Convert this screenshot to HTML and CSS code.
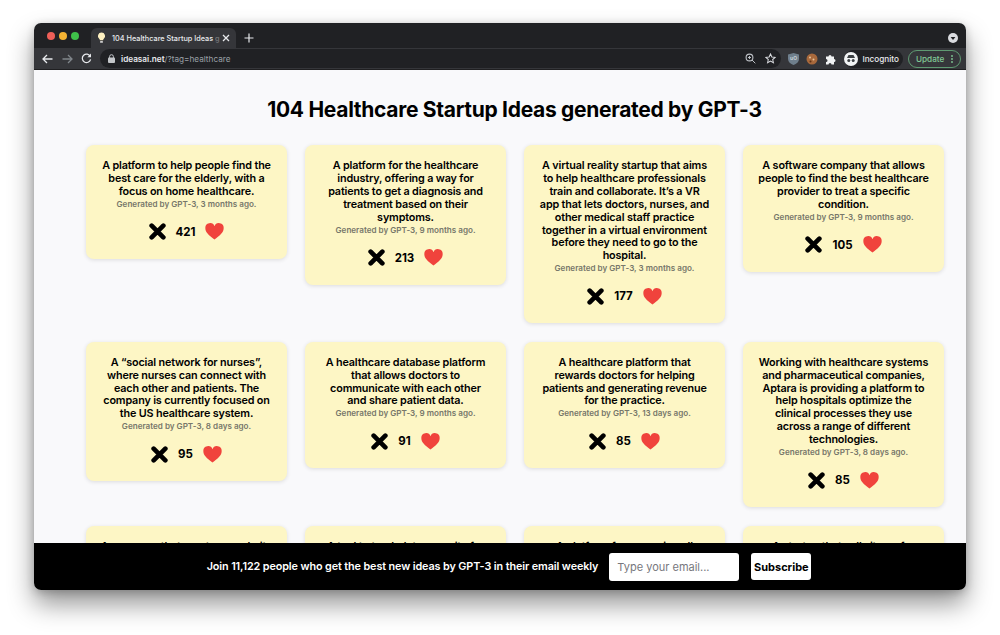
FILE: index.html
```html
<!DOCTYPE html>
<html lang="en">
<head>
    <meta charset="UTF-8">
    <title>104 Healthcare Startup Ideas generated by GPT-3</title>
    <link rel="stylesheet" href="styles.css">
</head>
<body>

<div class="window">
    <!-- Browser chrome -->
    <div class="tabbar">
        <div class="lights">
            <span class="light red"></span>
            <span class="light yellow"></span>
            <span class="light green"></span>
        </div>
        <div class="tab">
            <svg class="bulb" width="9" height="12" viewBox="0 0 10 12"><path d="M5 0a4 4 0 0 0-2.400 7.200c.4.4.6.8.6 1.300h3.600c0-.5.2-.9.6-1.300A4 4 0 0 0 5 0z" fill="#fdf0c0"/><rect x="3.400" y="9.200" width="3.200" height="2" rx=".6" fill="#cfcfcf"/></svg>
            <span class="tab-title">104 Healthcare Startup Ideas <span class="tab-fade">g</span></span>
            <svg width="8" height="8" viewBox="0 0 8 8"><path d="M1 1l6 6M7 1L1 7" stroke="#e8eaed" stroke-width="1.300"/></svg>
        </div>
        <svg class="newtab" width="10" height="10" viewBox="0 0 10 10"><path d="M5 .5v9M.5 5h9" stroke="#e8eaed" stroke-width="1.200"/></svg>
        <svg class="tabmenu" width="10" height="10" viewBox="0 0 10 10"><circle cx="5" cy="5" r="5" fill="#dadce0"/><path d="M2.600 4h4.800L5 7z" fill="#202124"/></svg>
    </div>
    <div class="toolbar">
        <svg width="11" height="10" viewBox="0 0 11 10"><path d="M10.500 5H1.500M5 1L1 5l4 4" fill="none" stroke="#e8eaed" stroke-width="1.300"/></svg>
        <svg class="nav-forward" width="11" height="10" viewBox="0 0 11 10"><path d="M.5 5h9M6 1l4 4-4 4" fill="none" stroke="#80868b" stroke-width="1.300"/></svg>
        <svg class="nav-reload" width="11" height="11" viewBox="0 0 11 11"><path d="M9.300 3.500A4.200 4.200 0 1 0 9.600 6.400" fill="none" stroke="#e8eaed" stroke-width="1.300"/><path d="M10 .6v3.600H6.400z" fill="#e8eaed"/></svg>
        <div class="omnibox">
            <svg width="7" height="9" viewBox="0 0 7 9"><rect y="3.500" width="7" height="5.500" rx="1" fill="#c4c7ca"/><path d="M1.600 4V2.600a1.900 1.900 0 0 1 3.800 0V4" fill="none" stroke="#c4c7ca"/></svg>
            <span class="url"><b>ideasai.net</b>/?tag=healthcare</span>
            <svg class="push" width="11" height="11" viewBox="0 0 11 11"><circle cx="4.500" cy="4.500" r="3.400" fill="none" stroke="#bdc1c6" stroke-width="1.100"/><path d="M7 7l3.300 3.300M3 4.500h3M4.500 3v3" stroke="#bdc1c6"/></svg>
            <svg width="11" height="11" viewBox="0 0 12 12"><path d="M6 1l1.500 3.300 3.600.4-2.700 2.400.8 3.500L6 8.800l-3.200 1.800.8-3.500L.9 4.700l3.600-.4z" fill="none" stroke="#dadce0" stroke-width="1.100"/></svg>
        </div>
        <svg class="ext" width="11" height="12" viewBox="0 0 11 12"><path d="M5.500 0L11 1.500V6c0 3-2.500 5-5.500 6C2.500 11 0 9 0 6V1.500z" fill="#6f7f8c"/><text x="5.500" y="7" class="ext-text">uO</text></svg>
        <svg class="ext" width="12" height="12" viewBox="0 0 12 12"><circle cx="6" cy="6" r="5.500" fill="#a8693c"/><circle cx="4" cy="4.500" r="1" fill="#e8c49a"/><circle cx="7.500" cy="6.500" r="1" fill="#e8c49a"/><circle cx="4.500" cy="8.500" r="1" fill="#5f3315"/></svg>
        <svg class="ext" width="12" height="12" viewBox="0 0 12 12"><path d="M1 3.500h2.500a1.500 1.500 0 0 1 3 0H9V6a1.500 1.500 0 0 1 0 3v2.500H6.500a1.500 1.500 0 0 0-3 0H1V9a1.500 1.500 0 0 0 0-3z" fill="#f1f3f4"/></svg>
        <div class="profile">
            <svg width="14" height="14" viewBox="0 0 14 14"><circle cx="7" cy="7" r="7" fill="#f1f3f4"/><path d="M3 6h8L9.500 3h-5z" fill="#3c4043"/><circle cx="4.800" cy="8.500" r="1.500" fill="#3c4043"/><circle cx="9.200" cy="8.500" r="1.500" fill="#3c4043"/></svg>
            <span>Incognito</span>
        </div>
        <div class="update">
            <span>Update</span>
            <svg width="2" height="8" viewBox="0 0 2 8"><circle cx="1" cy="1" r=".9" fill="#81c995"/><circle cx="1" cy="4" r=".9" fill="#81c995"/><circle cx="1" cy="7" r=".9" fill="#81c995"/></svg>
        </div>
    </div>

    <!-- Page -->
    <div class="page">
        <h1>104 Healthcare Startup Ideas generated by GPT-3</h1>
        <div class="ideas">
            <div class="idea">
                <h2>A platform to help people find the best care for the elderly, with a focus on home healthcare.</h2>
                <p>Generated by GPT-3, 3 months ago.</p>
                <div class="votes">
                    <svg class="cross" viewBox="0 0 16 16"><path d="M2.500 2.500l11 11M13.500 2.500l-11 11"/></svg>
                    <span>421</span>
                    <svg class="heart" viewBox="0 0 20 18"><path d="M10 17.500C4 13 .3 9.800.3 5.500A5 5 0 0 1 10 3.500a5 5 0 0 1 9.700 2c0 4.300-3.700 7.500-9.700 12z"/></svg>
                </div>
            </div>
            <div class="idea">
                <h2>A platform for the healthcare industry, offering a way for patients to get a diagnosis and treatment based on their symptoms.</h2>
                <p>Generated by GPT-3, 9 months ago.</p>
                <div class="votes">
                    <svg class="cross" viewBox="0 0 16 16"><path d="M2.500 2.500l11 11M13.500 2.500l-11 11"/></svg>
                    <span>213</span>
                    <svg class="heart" viewBox="0 0 20 18"><path d="M10 17.500C4 13 .3 9.800.3 5.500A5 5 0 0 1 10 3.500a5 5 0 0 1 9.700 2c0 4.300-3.700 7.500-9.700 12z"/></svg>
                </div>
            </div>
            <div class="idea">
                <h2>A virtual reality startup that aims to help healthcare professionals train and collaborate. It’s a VR app that lets doctors, nurses, and other medical staff practice together in a virtual environment before they need to go to the hospital.</h2>
                <p>Generated by GPT-3, 3 months ago.</p>
                <div class="votes">
                    <svg class="cross" viewBox="0 0 16 16"><path d="M2.500 2.500l11 11M13.500 2.500l-11 11"/></svg>
                    <span>177</span>
                    <svg class="heart" viewBox="0 0 20 18"><path d="M10 17.500C4 13 .3 9.800.3 5.500A5 5 0 0 1 10 3.500a5 5 0 0 1 9.700 2c0 4.300-3.700 7.500-9.700 12z"/></svg>
                </div>
            </div>
            <div class="idea">
                <h2>A software company that allows people to find the best healthcare provider to treat a specific condition.</h2>
                <p>Generated by GPT-3, 9 months ago.</p>
                <div class="votes">
                    <svg class="cross" viewBox="0 0 16 16"><path d="M2.500 2.500l11 11M13.500 2.500l-11 11"/></svg>
                    <span>105</span>
                    <svg class="heart" viewBox="0 0 20 18"><path d="M10 17.500C4 13 .3 9.800.3 5.500A5 5 0 0 1 10 3.500a5 5 0 0 1 9.700 2c0 4.300-3.700 7.500-9.700 12z"/></svg>
                </div>
            </div>
            <div class="idea">
                <h2>A “social network for nurses”, where nurses can connect with each other and patients. The company is currently focused on the US healthcare system.</h2>
                <p>Generated by GPT-3, 8 days ago.</p>
                <div class="votes">
                    <svg class="cross" viewBox="0 0 16 16"><path d="M2.500 2.500l11 11M13.500 2.500l-11 11"/></svg>
                    <span>95</span>
                    <svg class="heart" viewBox="0 0 20 18"><path d="M10 17.500C4 13 .3 9.800.3 5.500A5 5 0 0 1 10 3.500a5 5 0 0 1 9.700 2c0 4.300-3.700 7.500-9.700 12z"/></svg>
                </div>
            </div>
            <div class="idea">
                <h2>A healthcare database platform that allows doctors to communicate with each other and share patient data.</h2>
                <p>Generated by GPT-3, 9 months ago.</p>
                <div class="votes">
                    <svg class="cross" viewBox="0 0 16 16"><path d="M2.500 2.500l11 11M13.500 2.500l-11 11"/></svg>
                    <span>91</span>
                    <svg class="heart" viewBox="0 0 20 18"><path d="M10 17.500C4 13 .3 9.800.3 5.500A5 5 0 0 1 10 3.500a5 5 0 0 1 9.700 2c0 4.300-3.700 7.500-9.700 12z"/></svg>
                </div>
            </div>
            <div class="idea">
                <h2>A healthcare platform that rewards doctors for helping patients and generating revenue for the practice.</h2>
                <p>Generated by GPT-3, 13 days ago.</p>
                <div class="votes">
                    <svg class="cross" viewBox="0 0 16 16"><path d="M2.500 2.500l11 11M13.500 2.500l-11 11"/></svg>
                    <span>85</span>
                    <svg class="heart" viewBox="0 0 20 18"><path d="M10 17.500C4 13 .3 9.800.3 5.500A5 5 0 0 1 10 3.500a5 5 0 0 1 9.700 2c0 4.300-3.700 7.500-9.700 12z"/></svg>
                </div>
            </div>
            <div class="idea">
                <h2>Working with healthcare systems and pharmaceutical companies, Aptara is providing a platform to help hospitals optimize the clinical processes they use across a range of different technologies.</h2>
                <p>Generated by GPT-3, 8 days ago.</p>
                <div class="votes">
                    <svg class="cross" viewBox="0 0 16 16"><path d="M2.500 2.500l11 11M13.500 2.500l-11 11"/></svg>
                    <span>85</span>
                    <svg class="heart" viewBox="0 0 20 18"><path d="M10 17.500C4 13 .3 9.800.3 5.500A5 5 0 0 1 10 3.500a5 5 0 0 1 9.700 2c0 4.300-3.700 7.500-9.700 12z"/></svg>
                </div>
            </div>
            <div class="idea idea-cut"><h2>A company that creates a website</h2></div>
            <div class="idea idea-cut"><h2>A tool to track data on a site for</h2></div>
            <div class="idea idea-cut"><h2>A platform for managing all</h2></div>
            <div class="idea idea-cut"><h2>A startup that sells items for</h2></div>
        </div>
    </div>

    <!-- Newsletter bar -->
    <form class="subscribe">
        <label>Join 11,122 people who get the best new ideas by GPT-3 in their email weekly</label>
        <input type="text" placeholder="Type your email...">
        <button type="button">Subscribe</button>
    </form>
</div>

</body>
</html>
```
FILE: styles.css
```css
body {
    font-family: Inter, Arial, sans-serif;
    margin: 0;
    padding: 23px 34px 45px;
    background-color: #fff;
    overflow: hidden;
}

.window {
    height: 567px;
    display: flex;
    flex-direction: column;
    border-radius: 7px;
    overflow: hidden;
    box-shadow: 0 14px 26px rgba(0, 0, 0, 0.42), 0 2px 8px rgba(0, 0, 0, 0.2);
}

.window svg {
    flex: none;
}

/* Browser chrome */
.tabbar {
    height: 25px;
    flex: none;
    display: flex;
    align-items: flex-end;
    background-color: #202124;
    color: #e8eaed;
}

.lights {
    display: flex;
    gap: 4px;
    margin: 0 12px 0 13px;
    align-self: center;
}

.light {
    width: 8px;
    height: 8px;
    border-radius: 50%;
}

.red { background-color: #ee5f58; }
.yellow { background-color: #f5b333; }
.green { background-color: #3fc14a; }

.tab {
    width: 145px;
    height: 20px;
    display: flex;
    align-items: center;
    gap: 6px;
    padding: 0 6px;
    box-sizing: border-box;
    background-color: #35363a;
    border-radius: 6px 6px 0 0;
    font-size: 7.3px;
    font-weight: 500;
    white-space: nowrap;
}

.tab-title {
    flex: 1;
    min-width: 0;
}

.tab-fade {
    opacity: 0.35;
}

.newtab {
    margin: 0 0 5px 8px;
}

.tabmenu {
    margin: 0 8px 5px auto;
}

.toolbar {
    height: 22px;
    flex: none;
    display: flex;
    align-items: center;
    gap: 7px;
    padding: 0 5px 0 8px;
    background-color: #35363a;
    border-bottom: 1px solid #1f1f21;
    color: #e8eaed;
    box-sizing: border-box;
}

.nav-forward {
    margin-left: 2px;
}

.nav-reload {
    margin-left: 1px;
}

.omnibox {
    flex: 1;
    height: 19px;
    display: flex;
    align-items: center;
    gap: 6px;
    padding: 0 5px 0 8px;
    margin-left: 1px;
    background-color: #202124;
    border-radius: 10px;
}

.url {
    font-size: 8.2px;
    color: #9aa0a6;
}

.url b {
    font-weight: 600;
    color: #e8eaed;
}

.push {
    margin-left: auto;
    margin-right: 3px;
}

.ext-text {
    font-family: Inter, Arial, sans-serif;
    font-size: 5px;
    font-weight: 700;
    fill: #c9d1d8;
    text-anchor: middle;
}

.profile {
    height: 18px;
    display: flex;
    align-items: center;
    gap: 4px;
    padding: 0 4px 0 0;
    font-size: 8.2px;
    font-weight: 500;
    background-color: #202124;
    border-radius: 9px;
}

.update {
    width: 53px;
    height: 18px;
    display: flex;
    align-items: center;
    justify-content: space-between;
    padding: 0 7px;
    margin-left: -2px;
    box-sizing: border-box;
    border: 1px solid #5f9a72;
    border-radius: 9px;
    font-size: 8.2px;
    font-weight: 500;
    color: #81c995;
}

/* Page */
.page {
    flex: 1;
    min-height: 0;
    overflow: hidden;
    padding: 0 23px 0 52px;
    background-color: #f9f9fb;
}

h1 {
    margin: 27px 0 22px;
    font-size: 21px;
    line-height: 26px;
    font-weight: 700;
    letter-spacing: -0.3px;
    text-align: center;
    color: #000;
}

.ideas {
    display: grid;
    grid-template-columns: repeat(4, 201px);
    gap: 18.5px 18px;
    align-items: start;
}

.idea {
    padding: 15px 15.25px 17px;
    background-color: #fdf6c5;
    border-radius: 8px;
    box-shadow: 0 1px 4px rgba(0, 0, 0, 0.12);
    text-align: center;
}

.idea h2 {
    margin: 0;
    font-size: 10.8px;
    line-height: 12.9px;
    font-weight: 600;
    letter-spacing: -0.15px;
    color: #000;
}

.idea-cut {
    padding-left: 10px;
    padding-right: 10px;
}

.idea p {
    margin: 0;
    font-size: 8.1px;
    line-height: 11px;
    font-weight: 600;
    color: #77776a;
}

.votes {
    display: flex;
    justify-content: center;
    align-items: center;
    gap: 10px;
    margin-top: 12px;
    height: 20px;
    font-size: 11.5px;
    font-weight: 700;
    color: #000;
}

.cross {
    width: 17px;
    height: 17px;
    fill: none;
    stroke: #000;
    stroke-width: 4.4;
    stroke-linecap: round;
}

.heart {
    width: 19px;
    height: 17px;
    fill: #f0433c;
}

/* Newsletter bar */
.subscribe {
    height: 47px;
    flex: none;
    display: flex;
    align-items: center;
    justify-content: center;
    gap: 11px;
    padding-left: 18px;
    background-color: #000;
    color: #fff;
}

.subscribe label {
    font-size: 10.8px;
    font-weight: 600;
    letter-spacing: -0.1px;
}

.subscribe input {
    width: 130px;
    height: 28px;
    padding: 0 8px;
    box-sizing: border-box;
    border: 0;
    border-radius: 3px;
    font-family: inherit;
    font-size: 11px;
}

.subscribe input::placeholder {
    color: #77777d;
}

.subscribe button {
    width: 60px;
    height: 27px;
    margin-left: 1px;
    padding: 0;
    border: 0;
    border-radius: 3px;
    background-color: #fff;
    font-family: inherit;
    font-size: 11px;
    font-weight: 700;
    color: #000;
}
```
